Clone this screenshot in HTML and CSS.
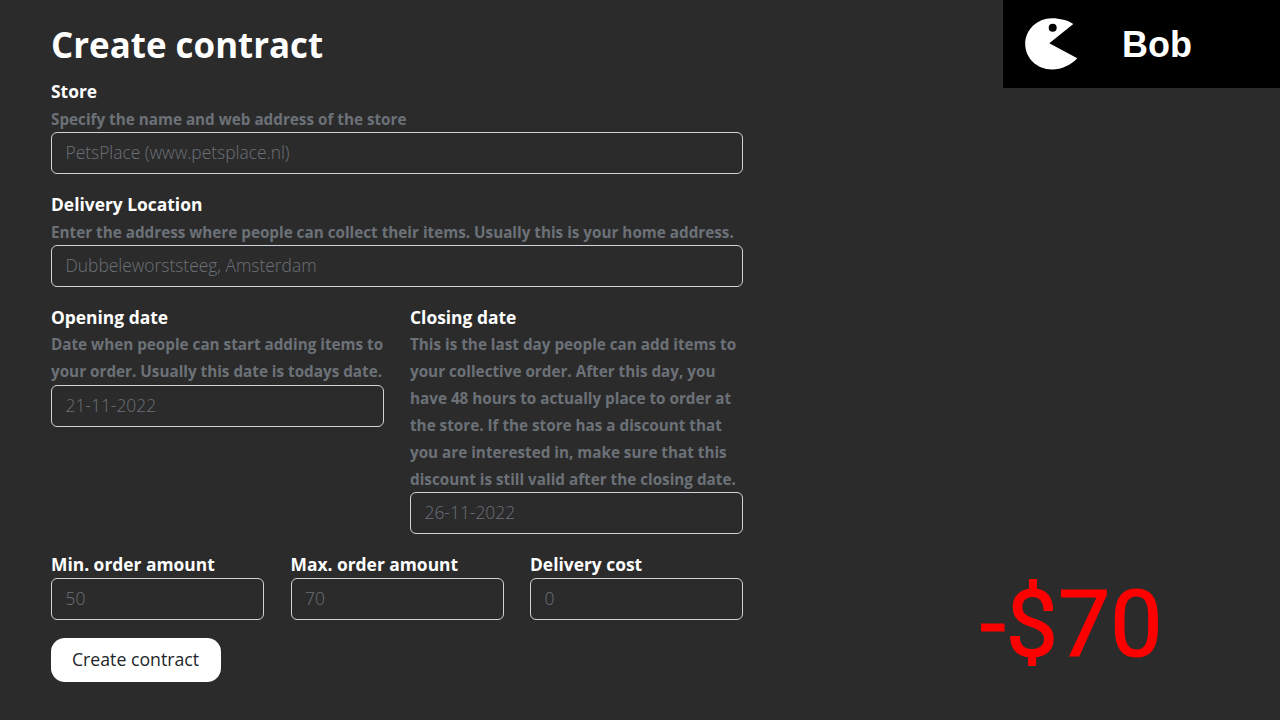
FILE: index.html
```html
<!DOCTYPE html>
<html lang="en">
<head>
<meta charset="utf-8">
<title>Create contract</title>
<link rel="stylesheet" href="styles.css">
</head>
<body>
<main class="form">
  <h1 class="title">Create contract</h1>
  <div class="field">
    <label class="label">Store</label>
    <p class="help">Specify the name and web address of the store</p>
    <input class="input" placeholder="PetsPlace (www.petsplace.nl)">
  </div>
  <div class="field">
    <label class="label">Delivery Location</label>
    <p class="help">Enter the address where people can collect their items. Usually this is your home address.</p>
    <input class="input" placeholder="Dubbeleworststeeg, Amsterdam">
  </div>
  <div class="row-two">
    <div class="field">
      <label class="label">Opening date</label>
      <p class="help">Date when people can start adding items to your order. Usually this date is todays date.</p>
      <input class="input" placeholder="21-11-2022">
    </div>
    <div class="field">
      <label class="label">Closing date</label>
      <p class="help">This is the last day people can add items to your collective order. After this day, you have 48 hours to actually place to order at the store. If the store has a discount that you are interested in, make sure that this discount is still valid after the closing date.</p>
      <input class="input" placeholder="26-11-2022">
    </div>
  </div>
  <div class="row-three">
    <div class="field">
      <label class="label">Min. order amount</label>
      <input class="input" placeholder="50">
    </div>
    <div class="field">
      <label class="label">Max. order amount</label>
      <input class="input" placeholder="70">
    </div>
    <div class="field">
      <label class="label">Delivery cost</label>
      <input class="input" placeholder="0">
    </div>
  </div>
  <button class="submit" type="button">Create contract</button>
</main>
<aside class="user">
  <svg class="avatar" width="54" height="52" viewBox="0 0 54 52">
    <path fill="#fff" fill-rule="evenodd" d="M48.300 6 C43 2.500 35 0.300 27 0.300 C12 0.300 0.200 12 0.200 26 C0.200 40 12 51.500 27 51.500 C37 51.500 46 47 52.300 40.300 L24.300 25.300 Z M23.700 9.700 a4 4 0 1 0 8 0 a4 4 0 1 0 -8 0 Z"/>
  </svg>
  <span class="user-name">Bob</span>
</aside>
<div class="balance">-$70</div>
</body>
</html>
```
FILE: styles.css
```css
* { box-sizing: border-box; }
html, body { margin: 0; height: 100%; }
body {
  background: #2b2b2b;
  color: #fff;
  font-family: "Open Sans", sans-serif;
  overflow: hidden;
}
.form {
  width: 692px;
  margin-left: 51px;
  padding-top: 21px;
  display: flex;
  flex-direction: column;
}
.title {
  margin: 0 0 9px;
  font-size: 34.9px;
  line-height: 48px;
  font-weight: 700;
}
.field { display: flex; flex-direction: column; margin-bottom: 16.6px; }
.label {
  font-size: 17.4px;
  line-height: 27.4px;
  font-weight: 700;
}
.help {
  margin: 0.4px 0 -0.4px;
  font-size: 15.25px;
  line-height: 26.85px;
  font-weight: 700;
  color: #6c7178;
}
.input {
  height: 42px;
  width: 100%;
  padding: 0 13.5px 2px;
  background: transparent;
  border: 1px solid #ced4da;
  border-radius: 6px;
  font-family: inherit;
  font-size: 17.4px;
  font-weight: 300;
  color: #fff;
  outline: none;
}
.input::placeholder { color: #6c7178; opacity: 1; }
.row-two { display: grid; grid-template-columns: 1fr 1fr; gap: 26px; align-items: start; }
.row-three { display: grid; grid-template-columns: repeat(3, 1fr); gap: 26.5px; align-items: start; }
.submit {
  align-self: flex-start;
  width: 170px;
  height: 44px;
  margin-top: 1px;
  padding: 0 1px 2px 0;
  background: #fff;
  border: 0;
  border-radius: 14px;
  color: #212529;
  font-family: inherit;
  font-size: 17.7px;
  font-weight: 400;
}
.user {
  position: absolute;
  top: 0;
  right: 0;
  width: 277px;
  height: 88px;
  background: #000;
  display: flex;
  align-items: center;
  padding-left: 22px;
  gap: 43px;
}
.user-name {
  margin-top: 2px;
  font-family: "Liberation Sans", Arial, sans-serif;
  font-size: 36px;
  font-weight: 700;
}
.balance {
  position: absolute;
  left: 980px;
  top: 569px;
  font-family: Roboto, sans-serif;
  font-size: 93px;
  font-weight: 400;
  line-height: 112px;
  color: #ff0000;
  -webkit-text-stroke: 1.2px #ff0000;
}
```
